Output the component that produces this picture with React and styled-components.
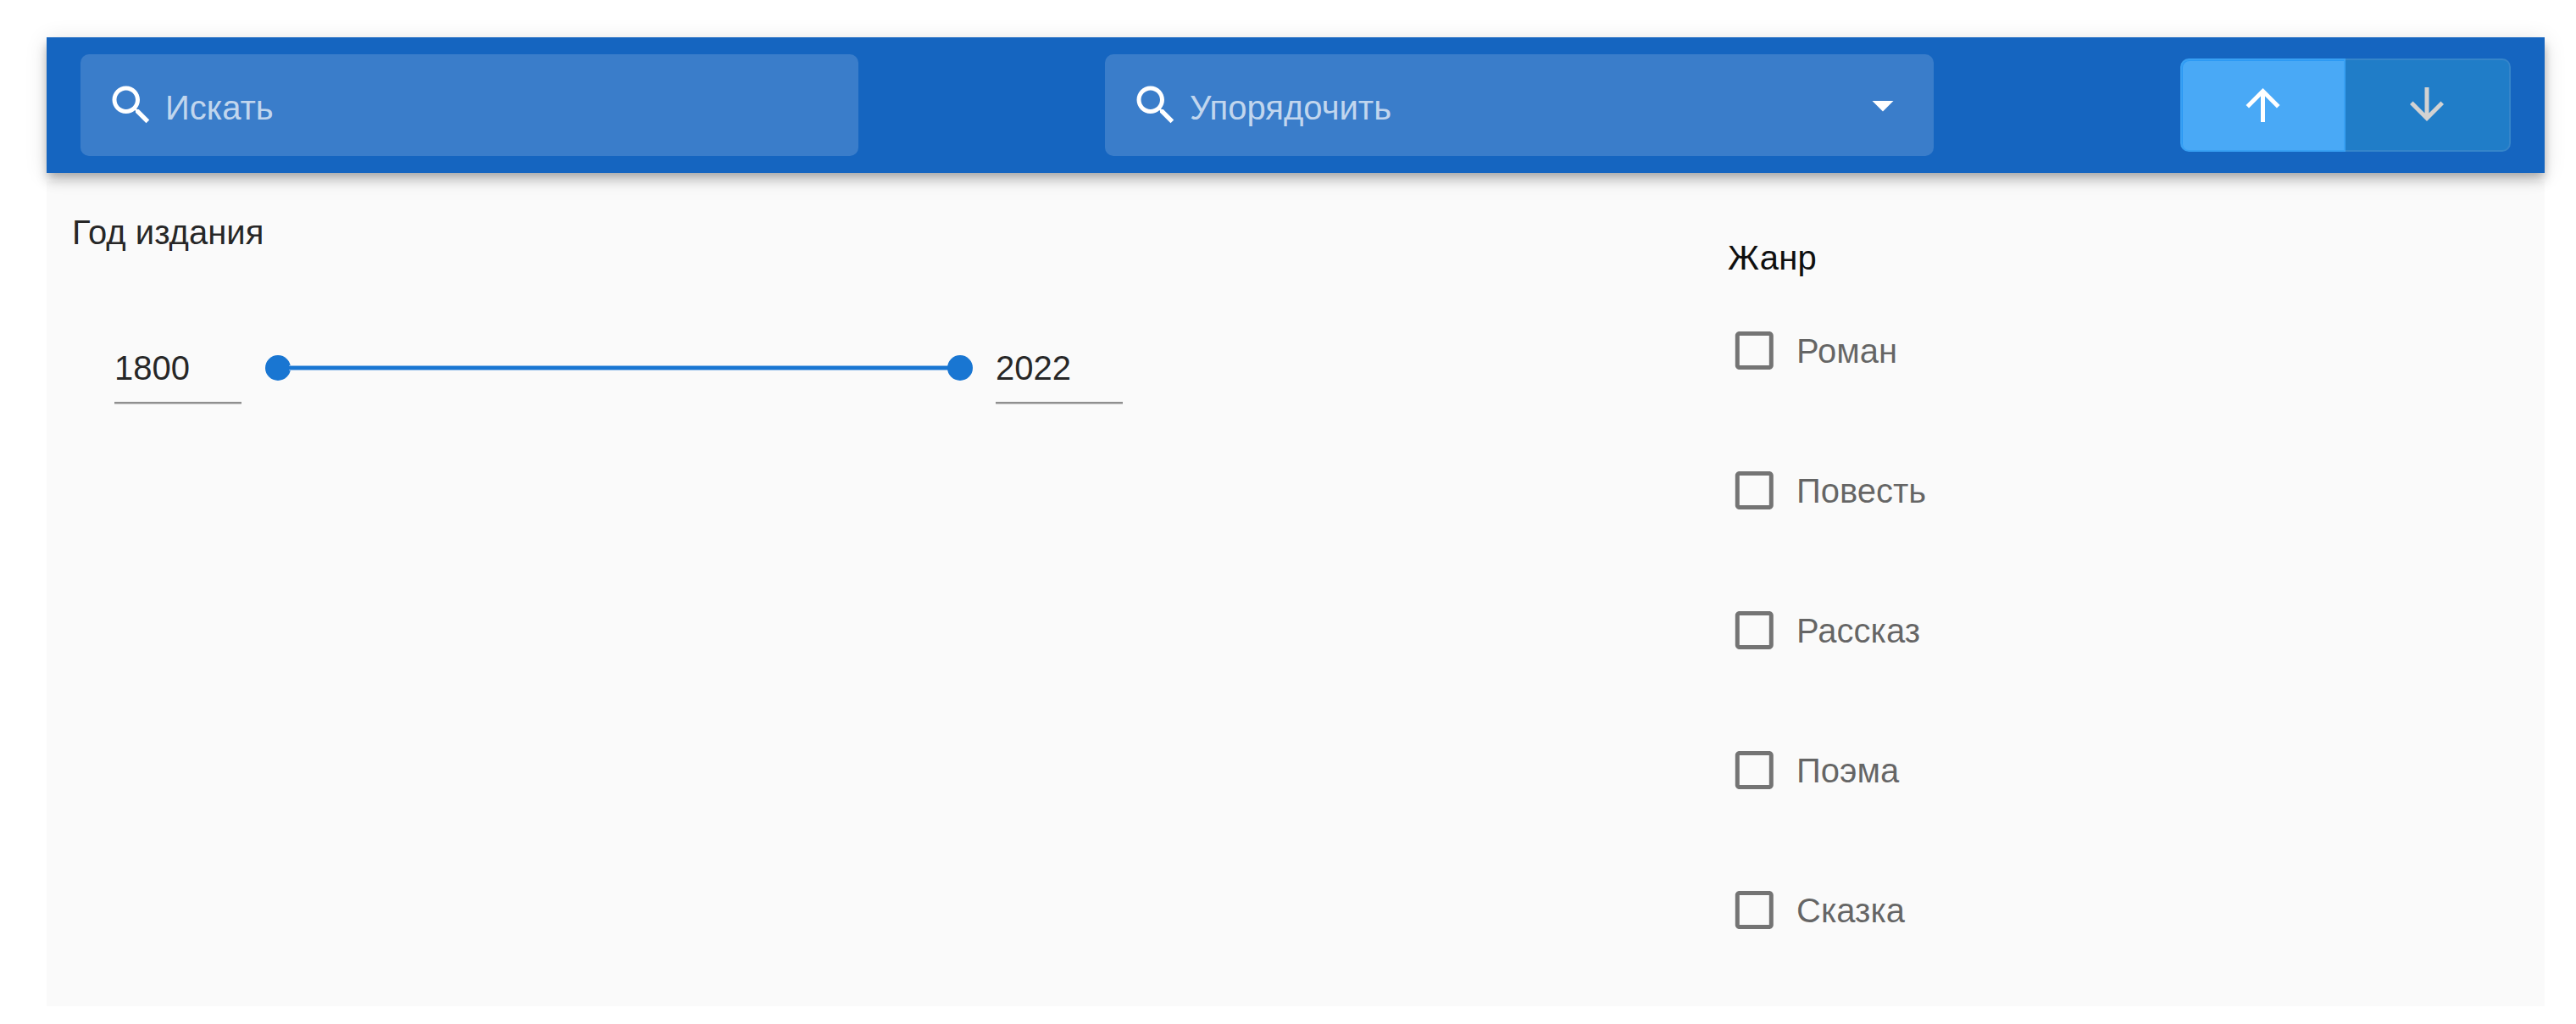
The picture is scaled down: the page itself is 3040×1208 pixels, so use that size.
import React, { useState } from "react";
import styled, { createGlobalStyle } from "styled-components";

const GlobalStyle = createGlobalStyle`
  *, *::before, *::after { box-sizing: border-box; }
  body {
    margin: 0;
    background: #fff;
    font-family: "Liberation Sans", Arial, sans-serif;
    font-size: 40px;
    color: rgba(0, 0, 0, 0.87);
  }
  button, input { font: inherit; color: inherit; }
`;

const Page = styled.div`
  display: flex;
  flex-direction: column;
  width: 3040px;
  height: 1208px;
  padding: 44px 37px 21px 55px;
`;

const AppBar = styled.header`
  position: relative;
  z-index: 1;
  display: flex;
  flex: none;
  align-items: center;
  justify-content: space-between;
  height: 160px;
  padding: 0 40px;
  background: #1565c0;
  box-shadow:
    0 5px 10px -2.5px rgba(0, 0, 0, 0.2),
    0 10px 12.5px 0 rgba(0, 0, 0, 0.14),
    0 2.5px 25px 0 rgba(0, 0, 0, 0.12);
`;

const Field = styled.div`
  display: flex;
  align-items: center;
  width: ${(p) => p.$width}px;
  height: 120px;
  padding: 0 30px;
  border-radius: 10px;
  background: rgba(255, 255, 255, 0.16);
  color: #fff;
`;

const FieldInput = styled.input`
  flex: 1;
  min-width: 0;
  height: 60px;
  margin: 6px 0 0 10px;
  padding: 0;
  border: 0;
  outline: 0;
  background: none;
  &::placeholder { color: rgba(255, 255, 255, 0.7); opacity: 1; }
`;

const Icon = styled.svg`
  display: block;
  flex: none;
  width: 60px;
  height: 60px;
  fill: ${(p) => p.$color || "currentColor"};
`;

const ToggleGroup = styled.div`
  display: flex;
  width: 390px;
  height: 110px;
`;

const Toggle = styled.button`
  display: flex;
  flex: none;
  align-items: center;
  justify-content: center;
  width: 195px;
  padding: ${(p) => (p.$end ? "0 1px 2px 0" : "0")};
  border: 2px solid ${(p) => (p.$on ? "#38a0f3" : "#3585ca")};
  border-left-width: ${(p) => (p.$end ? 0 : 2)}px;
  border-radius: ${(p) => (p.$end ? "0 10px 10px 0" : "10px 0 0 10px")};
  background: ${(p) => (p.$on ? "#49a9f6" : "#207dc8")};
  box-shadow: ${(p) => (p.$on ? "inset 1px 1px 0 #2b99f4" : "none")};
  color: ${(p) => (p.$on ? "#fff" : "#d2d2d2")};
`;

const Filters = styled.main`
  display: flex;
  flex: 1;
  margin-top: 10px;
  background: #fafafa;
`;

const YearSection = styled.section`
  width: 1954px;
  padding: 35px 30px 0;
`;

const GenreSection = styled.section`
  padding: 65px 30px 0;
`;

const Title = styled.h2`
  height: 50px;
  margin: 0;
  font-size: 40px;
  font-weight: 400;
  line-height: 50px;
  letter-spacing: ${(p) => p.$spacing || 0}px;
  color: ${(p) => p.$color || "inherit"};
`;

const RangeRow = styled.div`
  display: flex;
  padding: 95px 0 0 50px;
`;

const YearInput = styled.input`
  width: 150px;
  height: 82px;
  padding: 1px 0 0;
  border: 0;
  border-bottom: 2px solid #8f8f8f;
  border-radius: 0;
  outline: 0;
  background: none;
  box-shadow: 0 1px 0 #c4c4c4;
`;

const Slider = styled.div`
  display: flex;
  align-items: center;
  width: 835px;
  height: 30px;
  margin: 25px 27px 0 28px;
`;

const Thumb = styled.span`
  flex: none;
  width: 30px;
  height: 30px;
  border-radius: 50%;
  background: #1976d2;
`;

const Track = styled.span`
  flex: 1;
  height: 6px;
  margin: 0 -2px;
  border: solid #8bb9e8;
  border-width: 1px 0;
  background: #1976d2;
`;

const GenreList = styled.ul`
  display: flex;
  flex-direction: column;
  gap: 105px;
  margin: 0;
  padding: 54px 0 0;
  list-style: none;
`;

const GenreOption = styled.li`
  display: flex;
  align-items: center;
  height: 60px;
  gap: 20px;
  padding-left: 1px;
  color: rgba(0, 0, 0, 0.6);
`;

const GenreLabel = styled.span`
  padding-top: 2px;
  line-height: 60px;
`;

const PATHS = {
  search:
    "M15.5 14h-.79l-.28-.27C15.41 12.59 16 11.11 16 9.5 16 5.91 13.09 3 9.5 3S3 5.91 3 9.5 5.91 16 9.5 16c1.61 0 3.09-.59 4.23-1.57l.27.28v.79l5 4.99L20.49 19l-4.99-5zm-6 0C7.01 14 5 11.99 5 9.5S7.01 5 9.5 5 14 7.01 14 9.5 11.99 14 9.5 14z",
  caret: "M7 10l5 5 5-5z",
  up: "M4 12l1.41 1.41L11 7.83V20h2V7.83l5.58 5.59L20 12l-8-8-8 8z",
  down: "M20 12l-1.41-1.41L13 16.17V4h-2v12.17l-5.58-5.59L4 12l8 8 8-8z",
  checkbox:
    "M19 5v14H5V5h14m0-2H5c-1.1 0-2 .9-2 2v14c0 1.1.9 2 2 2h14c1.1 0 2-.9 2-2V5c0-1.1-.9-2-2-2z",
};

const VIEW_BOXES = {
  checkbox: "-0.12 -0.2 24 24",
  up: "0.2 0 24 24",
};

const Glyph = ({ name, color }) => (
  <Icon viewBox={VIEW_BOXES[name] || "0 0 24 24"} aria-hidden="true" $color={color}>
    <path d={PATHS[name]} />
  </Icon>
);

const GENRES = ["Роман", "Повесть", "Рассказ", "Поэма", "Сказка"];

export default function App() {
  const [order, setOrder] = useState("asc");
  return (
    <>
      <GlobalStyle />
      <Page>
        <AppBar>
          <Field $width={918}>
            <Glyph name="search" />
            <FieldInput placeholder="Искать" />
          </Field>
          <Field $width={978}>
            <Glyph name="search" />
            <FieldInput placeholder="Упорядочить" />
            <Glyph name="caret" />
          </Field>
          <ToggleGroup>
            <Toggle $on={order === "asc"} onClick={() => setOrder("asc")}>
              <Glyph name="up" />
            </Toggle>
            <Toggle $end $on={order === "desc"} onClick={() => setOrder("desc")}>
              <Glyph name="down" />
            </Toggle>
          </ToggleGroup>
        </AppBar>
        <Filters>
          <YearSection>
            <Title>Год издания</Title>
            <RangeRow>
              <YearInput defaultValue="1800" />
              <Slider>
                <Thumb />
                <Track />
                <Thumb />
              </Slider>
              <YearInput defaultValue="2022" />
            </RangeRow>
          </YearSection>
          <GenreSection>
            <Title $color="#0f0f0f" $spacing={0.3}>Жанр</Title>
            <GenreList>
              {GENRES.map((genre) => (
                <GenreOption key={genre}>
                  <Glyph name="checkbox" color="#747474" />
                  <GenreLabel>{genre}</GenreLabel>
                </GenreOption>
              ))}
            </GenreList>
          </GenreSection>
        </Filters>
      </Page>
    </>
  );
}
